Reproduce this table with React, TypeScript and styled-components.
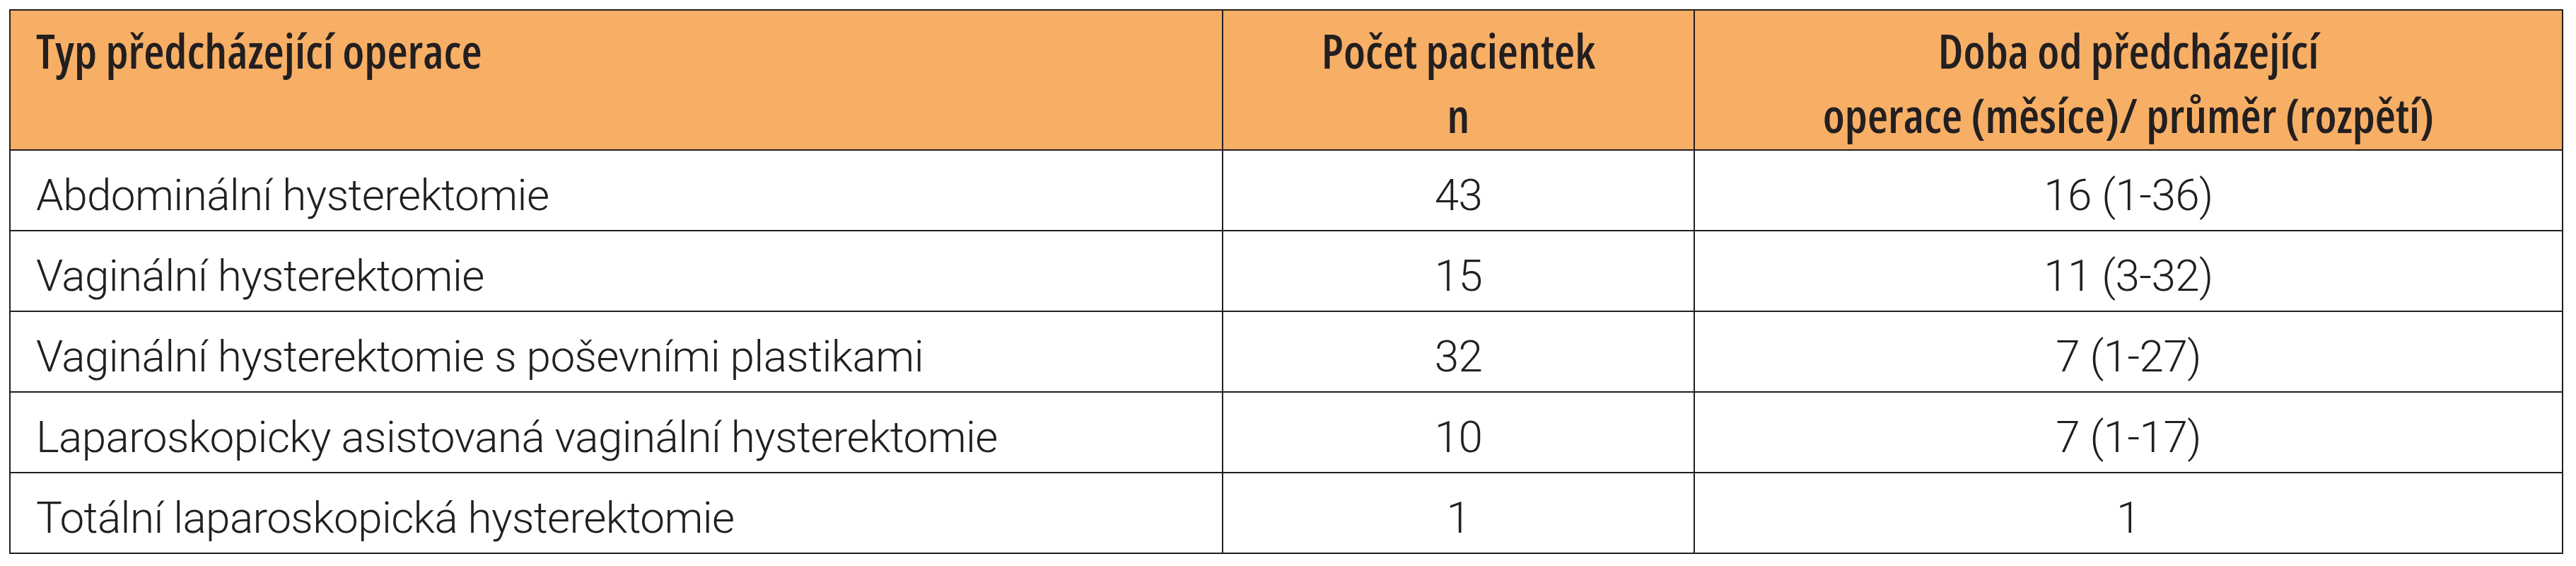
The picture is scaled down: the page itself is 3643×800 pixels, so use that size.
import React from "react";
import styled, { createGlobalStyle } from "styled-components";

const Global = createGlobalStyle`
  html, body {
    margin: 0;
    padding: 0;
    background: #ffffff;
  }
  body {
    font-family: "Roboto", "Liberation Sans", sans-serif;
  }
`;

const Page = styled.div`
  padding: 13px 0 0 13px;
`;

const Table = styled.table`
  border-collapse: collapse;
  table-layout: fixed;
  width: 3612px;
  border: 2px solid #231f20;
`;

const HeadCell = styled.th<{ $align?: "left" | "center" }>`
  background: #f7af66;
  color: #231f20;
  font-family: "Open Sans", "Liberation Sans", sans-serif;
  font-stretch: condensed;
  font-weight: 600;
  font-size: 67px;
  line-height: 91px;
  text-align: ${(p) => p.$align ?? "left"};
  vertical-align: top;
  height: 198px;
  box-sizing: border-box;
  padding: 11px ${(p) => (p.$align === "center" ? "0" : "36px")} 0;
  border: 2px solid #231f20;
`;

const Cell = styled.td<{ $align?: "left" | "center" }>`
  color: #231f20;
  font-family: "Roboto", "Liberation Sans", sans-serif;
  font-weight: 300;
  font-size: 62px;
  letter-spacing: -0.6px;
  text-align: ${(p) => p.$align ?? "left"};
  vertical-align: middle;
  height: 114px;
  box-sizing: border-box;
  padding: 12px ${(p) => (p.$align === "center" ? "0" : "36px")} 0;
  border: 2px solid #231f20;
  white-space: nowrap;
`;

const rows: [string, string, string][] = [
  ["Abdominální hysterektomie", "43", "16 (1-36)"],
  ["Vaginální hysterektomie", "15", "11 (3-32)"],
  ["Vaginální hysterektomie s poševními plastikami", "32", "7 (1-27)"],
  ["Laparoskopicky asistovaná vaginální hysterektomie", "10", "7 (1-17)"],
  ["Totální laparoskopická hysterektomie", "1", "1"],
];

export default function App() {
  return (
    <>
      <Global />
      <Page>
        <Table>
          <colgroup>
            <col style={{ width: 1715 }} />
            <col style={{ width: 667 }} />
            <col style={{ width: 1228 }} />
          </colgroup>
          <thead>
            <tr>
              <HeadCell>Typ předcházející operace</HeadCell>
              <HeadCell $align="center">
                Počet pacientek
                <br />n
              </HeadCell>
              <HeadCell $align="center">
                Doba od předcházející
                <br />
                operace (měsíce)/ průměr (rozpětí)
              </HeadCell>
            </tr>
          </thead>
          <tbody>
            {rows.map(([a, b, c]) => (
              <tr key={a}>
                <Cell>{a}</Cell>
                <Cell $align="center">{b}</Cell>
                <Cell $align="center">{c}</Cell>
              </tr>
            ))}
          </tbody>
        </Table>
      </Page>
    </>
  );
}
